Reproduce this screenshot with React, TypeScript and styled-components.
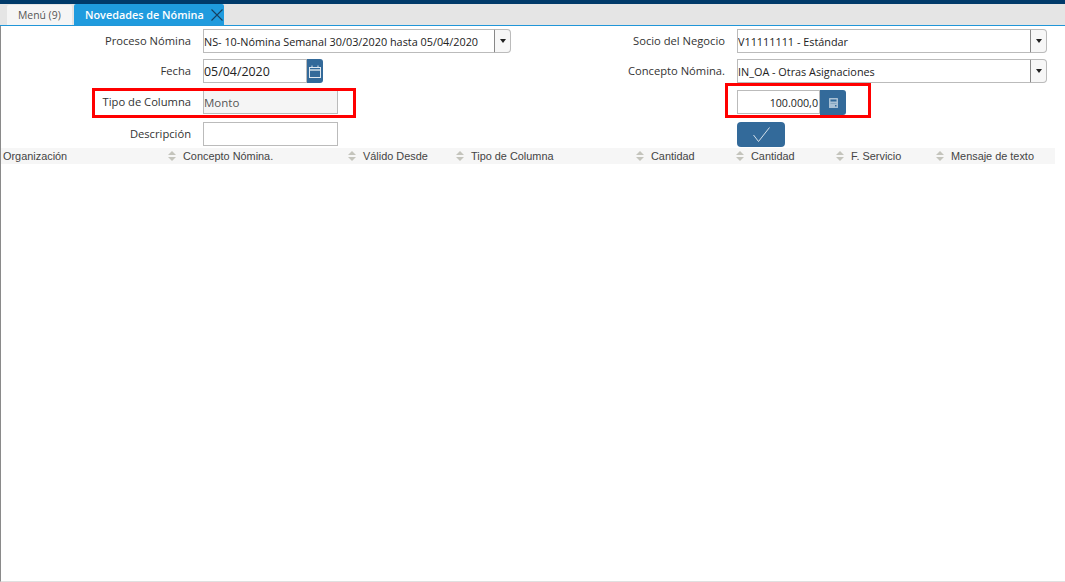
import styled, { createGlobalStyle } from "styled-components";

const GlobalStyle = createGlobalStyle`
  html, body {
    margin: 0;
    padding: 0;
    background: #fff;
  }
  * {
    box-sizing: border-box;
  }
`;

const Page = styled.div`
  position: relative;
  width: 1065px;
  height: 582px;
  overflow: hidden;
  background: #fff;
  border-top: 4px solid #003a6a;
  font-family: "Open Sans", sans-serif;
`;

const TabBar = styled.div`
  display: flex;
  align-items: flex-end;
  height: 22px;
  padding-left: 7px;
  gap: 2px;
  background: #e5e5e5;
  border-bottom: 1px solid #2196d8;
`;

const Tab = styled.div<{ $active?: boolean }>`
  display: flex;
  align-items: center;
  height: ${({ $active }) => ($active ? "21px" : "20px")};
  padding-left: 11px;
  font-size: ${({ $active }) => ($active ? "10.85px" : "10.4px")};
  font-weight: ${({ $active }) => ($active ? 600 : 400)};
  color: ${({ $active }) => ($active ? "#fff" : "#555")};
  background: ${({ $active }) => ($active ? "#1f9bde" : "#f5f5f5")};
  width: ${({ $active }) => ($active ? "150px" : "65px")};
  border-radius: 2px 2px 0 0;
  white-space: nowrap;
`;

const CloseIcon = styled.svg`
  margin-left: auto;
  margin-right: 1px;
  flex-shrink: 0;
`;

const Content = styled.div`
  height: 556px;
  border-left: 1px solid #8a8a8a;
  border-bottom: 1px solid #e0e0e0;
  padding-top: 3px;
`;

const FormGrid = styled.div`
  display: grid;
  grid-template-columns: 202px 308px 226px 310px;
  grid-template-rows: 30px 31px 32px 26px;
`;

const Label = styled.div`
  height: 24px;
  padding-right: 12px;
  text-align: right;
  font-size: 11.2px;
  line-height: 23px;
  color: #333;
`;

const Input = styled.div<{ $width: number; $disabled?: boolean; $right?: boolean; $large?: boolean }>`
  width: ${({ $width }) => $width}px;
  height: 24px;
  padding: 0 1px 0 0;
  border: 1px solid #bbb;
  background: ${({ $disabled }) => ($disabled ? "#f5f5f5" : "#fff")};
  color: ${({ $disabled }) => ($disabled ? "#555" : "#222")};
  font-size: ${({ $large, $right }) => ($large ? "12.4px" : $right ? "10.7px" : "11.5px")};
  line-height: 24px;
  text-align: ${({ $right }) => ($right ? "right" : "left")};
  white-space: nowrap;
  overflow: hidden;
`;

const Field = styled.div`
  display: flex;
  align-items: flex-start;
`;

const Combo = styled.div`
  display: flex;
  height: 24px;
  font-size: 10.85px;
  color: #222;
`;

const ComboText = styled.div`
  flex: 1;
  padding: 0;
  border: 1px solid #bbb;
  border-right: none;
  line-height: 24px;
  white-space: nowrap;
  overflow: hidden;
`;

const ComboButton = styled.div`
  display: flex;
  align-items: center;
  justify-content: center;
  width: 17px;
  border: 1px solid #bbb;
  border-left-color: #888;
  border-radius: 0 4px 4px 0;
  background: #f7f7f7;
  &::after {
    content: "";
    border-left: 3.5px solid transparent;
    border-right: 3.5px solid transparent;
    border-top: 4px solid #222;
  }
`;

const IconButton = styled.div<{ $width: number; $height: number; $round?: boolean }>`
  display: flex;
  align-items: center;
  justify-content: center;
  width: ${({ $width }) => $width}px;
  height: ${({ $height }) => $height}px;
  background: #336a9a;
  border-radius: ${({ $round }) => ($round ? "4px" : "0 3px 3px 0")};
`;

const GridHeader = styled.div`
  display: grid;
  grid-template-columns: 180px 180px 108px 180px 100px 100px 100px 86px;
  height: 16px;
  width: 1054px;
  background: #f6f6f6;
`;

const HeaderCell = styled.div`
  display: flex;
  align-items: center;
  justify-content: space-between;
  padding: 0 4px 0 2px;
  font-family: "Liberation Sans", Arial, sans-serif;
  font-size: 10.9px;
  color: #444;
  white-space: nowrap;
`;

const SortIcon = styled.svg`
  flex-shrink: 0;
  margin-right: 1px;
`;

const Highlight = styled.div<{ $left: number; $top: number; $width: number; $height: number }>`
  position: absolute;
  left: ${({ $left }) => $left}px;
  top: ${({ $top }) => $top}px;
  width: ${({ $width }) => $width}px;
  height: ${({ $height }) => $height}px;
  border: 3px solid #f00;
  pointer-events: none;
`;

const columns = [
  "Organización",
  "Concepto Nómina.",
  "Válido Desde",
  "Tipo de Columna",
  "Cantidad",
  "Cantidad",
  "F. Servicio",
  "Mensaje de texto",
];

function Sort() {
  return (
    <SortIcon width="8" height="10" viewBox="0 0 8 10">
      <path d="M4 0 L8 4 H0 Z M0 6 H8 L4 10 Z" fill="#c4c4bc" />
    </SortIcon>
  );
}

export default function App() {
  return (
    <>
      <GlobalStyle />
      <Page>
        <TabBar>
          <Tab>Menú (9)</Tab>
          <Tab $active>
            Novedades de Nómina
            <CloseIcon width="12" height="12" viewBox="0 0 12 12">
              <path d="M0.5 0.5 L11.5 11.5 M11.5 0.5 L0.5 11.5" stroke="#17405f" strokeWidth="1.1" fill="none" />
            </CloseIcon>
          </Tab>
        </TabBar>
        <Content>
          <FormGrid>
            <Label>Proceso Nómina</Label>
            <Combo>
              <ComboText>NS- 10-Nómina Semanal 30/03/2020 hasta 05/04/2020</ComboText>
              <ComboButton />
            </Combo>
            <Label>Socio del Negocio</Label>
            <Combo>
              <ComboText>V11111111 - Estándar</ComboText>
              <ComboButton />
            </Combo>

            <Label>Fecha</Label>
            <Field>
              <Input $width={104} $large>05/04/2020</Input>
              <IconButton $width={16} $height={24}>
                <svg width="12" height="13" viewBox="0 0 12 13" fill="none">
                  <rect x="0.5" y="2.5" width="11" height="10" stroke="#dfe8f0" />
                  <path d="M0.5 5 H11.5" stroke="#dfe8f0" strokeWidth="1.4" />
                  <path d="M3 0.5 V2.5 M9 0.5 V2.5" stroke="#dfe8f0" />
                </svg>
              </IconButton>
            </Field>
            <Label>Concepto Nómina.</Label>
            <Combo>
              <ComboText>IN_OA - Otras Asignaciones</ComboText>
              <ComboButton />
            </Combo>

            <Label>Tipo de Columna</Label>
            <Input $width={135} $disabled>Monto</Input>
            <Label />
            <Field>
              <Input $width={83} $right>100.000,0</Input>
              <IconButton $width={26} $height={25}>
                <svg width="9" height="10" viewBox="0 0 9 10">
                  <rect x="0" y="0" width="9" height="10" rx="0.5" fill="#a9c1d5" />
                  <rect x="1.5" y="1.5" width="6" height="2" fill="#336a9a" />
                  <rect x="1.5" y="5" width="6" height="0.8" fill="#7fa0bc" />
                  <rect x="6" y="7" width="1.5" height="1.5" fill="#336a9a" />
                </svg>
              </IconButton>
            </Field>

            <Label>Descripción</Label>
            <Input $width={135} />
            <Label />
            <IconButton $width={48} $height={25} $round>
              <svg width="17" height="15" viewBox="0 0 17 15" fill="none">
                <path d="M0.5 8 L5.5 14.5 L16.5 0.5" stroke="#d5e1eb" strokeWidth="1" />
              </svg>
            </IconButton>
          </FormGrid>
          <GridHeader>
            {columns.map((name, i) => (
              <HeaderCell key={i}>
                {name}
                {i < columns.length - 1 && <Sort />}
              </HeaderCell>
            ))}
          </GridHeader>
        </Content>
        <Highlight $left={92} $top={84} $width={264} $height={30} />
        <Highlight $left={725} $top={79} $width={146} $height={35} />
      </Page>
    </>
  );
}
